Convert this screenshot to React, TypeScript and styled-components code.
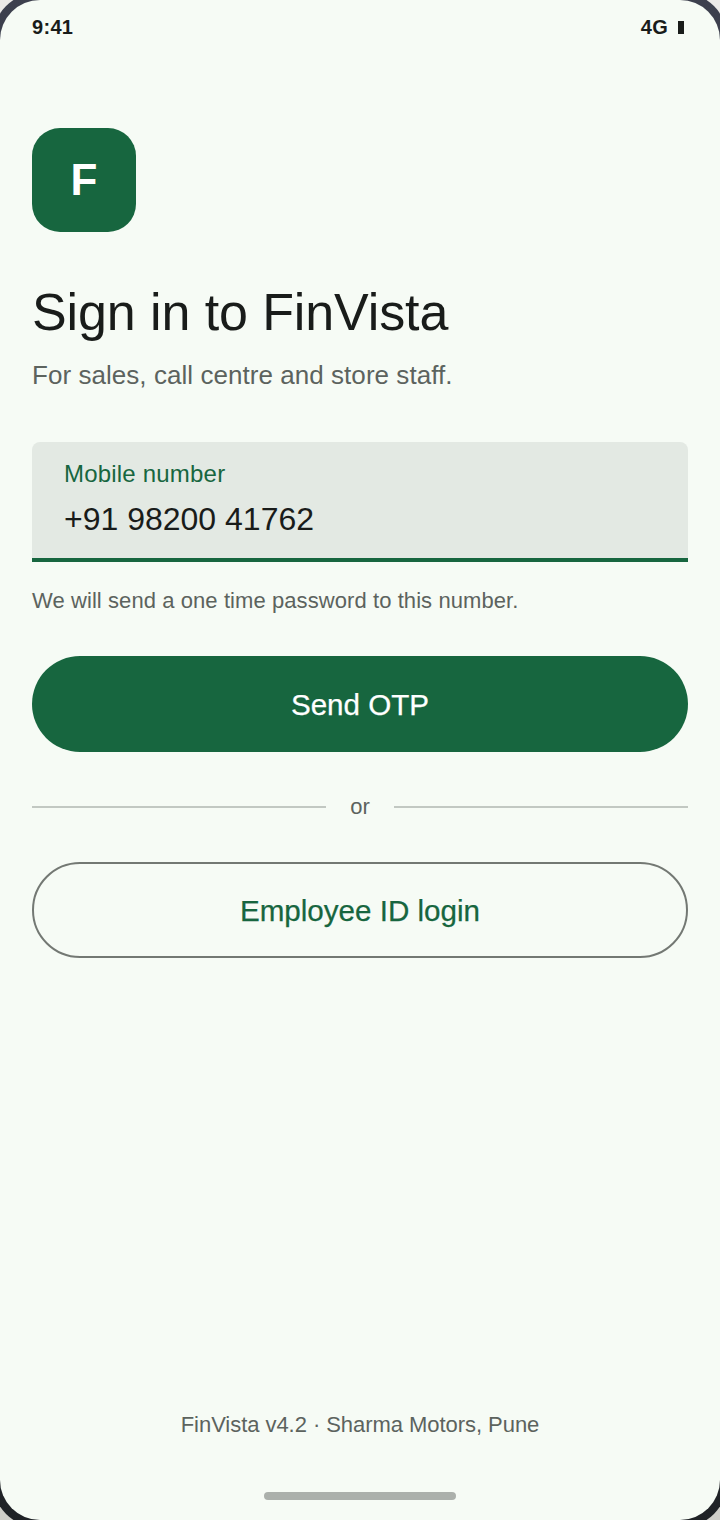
import React from 'react';
import styled, { createGlobalStyle } from 'styled-components';

const GlobalStyle = createGlobalStyle`
  html, body {
    margin: 0;
    padding: 0;
    height: 100%;
    overflow: hidden;
    background: linear-gradient(180deg, #ebe9e7 0%, #cfcec9 100%);
  }
  body {
    font-family: "Liberation Sans", Arial, sans-serif;
  }
`;

// the bezel runs 8px past the window, only its corners show
const Frame = styled.div`
  width: 736px;
  height: 1536px;
  margin: -8px;
  padding: 8px;
  box-sizing: border-box;
  background: linear-gradient(180deg, #3d404e 0%, #1f2226 100%);
  border-radius: 48px;
`;

const Screen = styled.main`
  height: 100%;
  box-sizing: border-box;
  background: #f6fbf5;
  border-radius: 40px;
  display: flex;
  flex-direction: column;
  color: #191c1a;
`;

const StatusBar = styled.header`
  height: 54px;
  padding: 0 36px 0 32px;
  display: flex;
  align-items: center;
  justify-content: space-between;
  font-size: 20px;
  font-weight: 700;
  letter-spacing: 0.3px;
`;

const StatusRight = styled.div`
  display: flex;
  align-items: center;
  gap: 10px;
`;

const Battery = styled.span`
  width: 6px;
  height: 13px;
  margin-top: 1px;
  background: #191c1a;
`;

const Body = styled.section`
  flex: 1;
  padding: 74px 32px 0;
  display: flex;
  flex-direction: column;
`;

const Logo = styled.div`
  width: 104px;
  height: 104px;
  border-radius: 28px;
  background: #17663f;
  color: #ffffff;
  display: flex;
  align-items: center;
  justify-content: center;
  font-size: 44px;
  font-weight: 700;
`;

const Heading = styled.h1`
  margin: 48px 0 0;
  font-size: 52px;
  line-height: 64px;
  font-weight: 400;
  letter-spacing: -0.1px;
`;

const Subtitle = styled.p`
  margin: 13px 0 0;
  font-size: 26px;
  line-height: 36px;
  letter-spacing: 0.05px;
  color: #5c635e;
`;

const Field = styled.div`
  margin-top: 49px;
  height: 120px;
  box-sizing: border-box;
  padding: 18px 32px 0;
  background: #e3e9e3;
  border-radius: 8px 8px 0 0;
  border-bottom: 4px solid #17663f;
`;

const FieldLabel = styled.div`
  font-size: 24px;
  line-height: 28px;
  letter-spacing: 0.2px;
  color: #17663f;
`;

const FieldValue = styled.div`
  margin-top: 9px;
  font-size: 32px;
  line-height: 44px;
`;

const Helper = styled.p`
  margin: 24px 0 0;
  font-size: 22px;
  line-height: 30px;
  letter-spacing: 0.08px;
  color: #5c635e;
`;

const Button = styled.button<{ $outlined?: boolean }>`
  display: block;
  width: 100%;
  height: 96px;
  padding: 2px 0 0;
  box-sizing: border-box;
  border-radius: 48px;
  font-family: inherit;
  font-size: 29.6px;
  -webkit-text-stroke: 0.25px currentColor;
  background: ${p => (p.$outlined ? 'transparent' : '#17663f')};
  color: ${p => (p.$outlined ? '#17663f' : '#ffffff')};
  border: ${p => (p.$outlined ? '2px solid #737873' : 'none')};
`;

const PrimaryButton = styled(Button)`
  margin-top: 40px;
`;

const Divider = styled.div`
  margin: 40px 0;
  height: 30px;
  display: flex;
  align-items: center;
  gap: 24px;
  font-size: 22px;
  color: #5c635e;
`;

const Rule = styled.span`
  flex: 1;
  height: 2px;
  background: #c2c8c2;
`;

const Footer = styled.footer`
  text-align: center;
  font-size: 22px;
  line-height: 30px;
  letter-spacing: -0.05px;
  color: #5c635e;
`;

const HomeBar = styled.div`
  margin: 52px auto 20px;
  width: 192px;
  height: 8px;
  border-radius: 4px;
  background: #abb0ab;
`;

export default function App() {
  return (
    <>
      <GlobalStyle />
      <Frame>
        <Screen>
          <StatusBar>
            <span>9:41</span>
            <StatusRight>
              <span>4G</span>
              <Battery />
            </StatusRight>
          </StatusBar>
          <Body>
            <Logo>F</Logo>
            <Heading>Sign in to FinVista</Heading>
            <Subtitle>For sales, call centre and store staff.</Subtitle>
            <Field>
              <FieldLabel>Mobile number</FieldLabel>
              <FieldValue>+91 98200 41762</FieldValue>
            </Field>
            <Helper>We will send a one time password to this number.</Helper>
            <PrimaryButton>Send OTP</PrimaryButton>
            <Divider>
              <Rule />
              or
              <Rule />
            </Divider>
            <Button $outlined>Employee ID login</Button>
          </Body>
          <Footer>FinVista v4.2 · Sharma Motors, Pune</Footer>
          <HomeBar />
        </Screen>
      </Frame>
    </>
  );
}
